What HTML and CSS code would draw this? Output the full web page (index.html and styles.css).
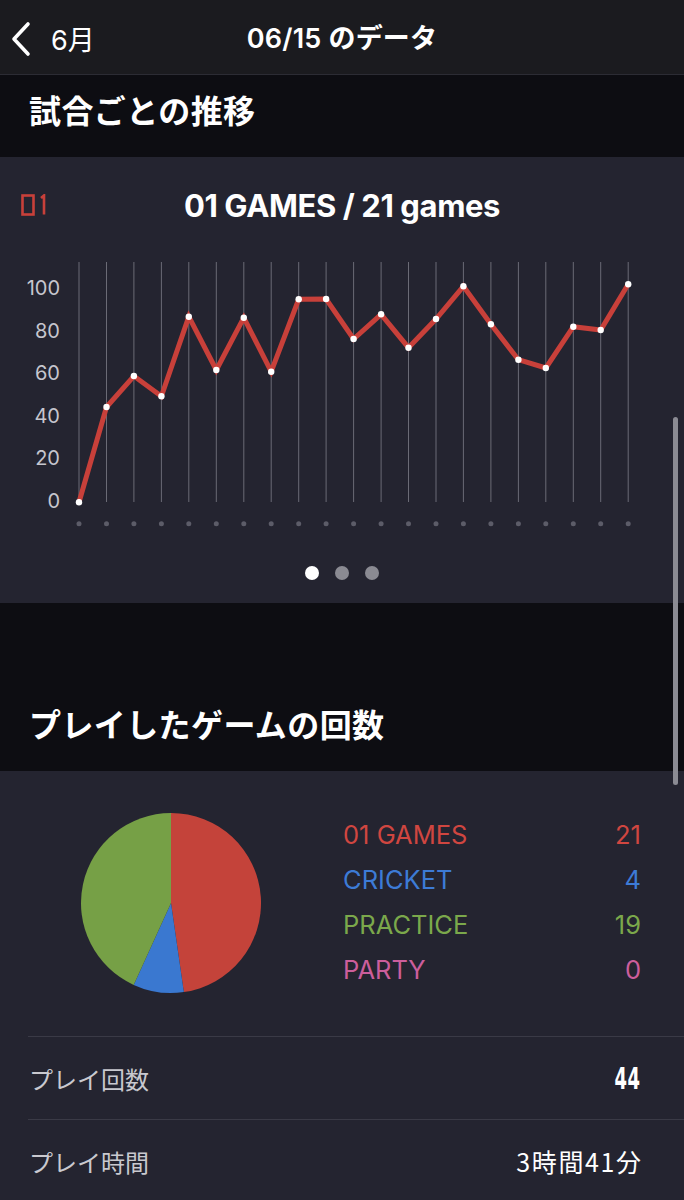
FILE: index.html
```html
<!DOCTYPE html>
<html lang="ja">
<head>
<meta charset="utf-8">
<title>06/15 のデータ</title>
<link rel="stylesheet" href="styles.css">
</head>
<body>
<header class="nav">
  <a class="nav-back">
    <svg class="chevron" width="20" height="36" viewBox="0 0 20 36"><path d="M17 3 L3 18 L17 33" fill="none" stroke="#fff" stroke-width="3.6" stroke-linecap="round" stroke-linejoin="round"/></svg>
    <span>6月</span>
  </a>
  <h1 class="nav-title">06/15 のデータ</h1>
</header>

<section class="section-head"><h2>試合ごとの推移</h2></section>

<section class="card trend">
  <div class="chart-head">
    <svg class="game-icon" width="28" height="22" viewBox="0 0 28 22">
      <rect x="1.5" y="1.5" width="11" height="19" fill="none" stroke="#c8403a" stroke-width="2.6"/>
      <path d="M20 4 L23 1.5 L23 20.5" fill="none" stroke="#c8403a" stroke-width="2.6"/>
    </svg>
    <h3>01 GAMES / 21 games</h3>
  </div>
  <svg class="chart" width="684" height="300" viewBox="0 0 684 300">
    <g class="grid" stroke="#6b6b76" stroke-width="1">
      <line x1="79" y1="22" x2="79" y2="262"/>
      <line x1="106.5" y1="22" x2="106.5" y2="262"/>
      <line x1="133.9" y1="22" x2="133.9" y2="262"/>
      <line x1="161.4" y1="22" x2="161.4" y2="262"/>
      <line x1="188.8" y1="22" x2="188.8" y2="262"/>
      <line x1="216.3" y1="22" x2="216.3" y2="262"/>
      <line x1="243.8" y1="22" x2="243.8" y2="262"/>
      <line x1="271.2" y1="22" x2="271.2" y2="262"/>
      <line x1="298.7" y1="22" x2="298.7" y2="262"/>
      <line x1="326.1" y1="22" x2="326.1" y2="262"/>
      <line x1="353.6" y1="22" x2="353.6" y2="262"/>
      <line x1="381.1" y1="22" x2="381.1" y2="262"/>
      <line x1="408.5" y1="22" x2="408.5" y2="262"/>
      <line x1="436" y1="22" x2="436" y2="262"/>
      <line x1="463.4" y1="22" x2="463.4" y2="262"/>
      <line x1="490.9" y1="22" x2="490.9" y2="262"/>
      <line x1="518.4" y1="22" x2="518.4" y2="262"/>
      <line x1="545.8" y1="22" x2="545.8" y2="262"/>
      <line x1="573.3" y1="22" x2="573.3" y2="262"/>
      <line x1="600.7" y1="22" x2="600.7" y2="262"/>
      <line x1="628.2" y1="22" x2="628.2" y2="262"/>
    </g>
    <g class="axis" text-anchor="end" dominant-baseline="central">
      <text x="60" y="48">100</text>
      <text x="60" y="90.5">80</text>
      <text x="60" y="133">60</text>
      <text x="60" y="175.5">40</text>
      <text x="60" y="218">20</text>
      <text x="60" y="260.5">0</text>
    </g>
    <polyline fill="none" stroke="#c8403a" stroke-width="5" stroke-linejoin="miter" points="79,262.3 106.5,167 133.9,136 161.4,156.3 188.8,76.7 216.3,130 243.8,77.7 271.2,131.7 298.7,59.3 326.1,59 353.6,99 381.1,74.3 408.5,107.7 436,79 463.4,46.3 490.9,84.3 518.4,119.7 545.8,128 573.3,86.7 600.7,90 628.2,44.3"/>
    <g fill="#fff">
      <circle cx="79" cy="262.3" r="3.2"/><circle cx="106.5" cy="167" r="3.2"/><circle cx="133.9" cy="136" r="3.2"/>
      <circle cx="161.4" cy="156.3" r="3.2"/><circle cx="188.8" cy="76.7" r="3.2"/><circle cx="216.3" cy="130" r="3.2"/>
      <circle cx="243.8" cy="77.7" r="3.2"/><circle cx="271.2" cy="131.7" r="3.2"/><circle cx="298.7" cy="59.3" r="3.2"/>
      <circle cx="326.1" cy="59" r="3.2"/><circle cx="353.6" cy="99" r="3.2"/><circle cx="381.1" cy="74.3" r="3.2"/>
      <circle cx="408.5" cy="107.7" r="3.2"/><circle cx="436" cy="79" r="3.2"/><circle cx="463.4" cy="46.3" r="3.2"/>
      <circle cx="490.9" cy="84.3" r="3.2"/><circle cx="518.4" cy="119.7" r="3.2"/><circle cx="545.8" cy="128" r="3.2"/>
      <circle cx="573.3" cy="86.7" r="3.2"/><circle cx="600.7" cy="90" r="3.2"/><circle cx="628.2" cy="44.3" r="3.2"/>
    </g>
    <g fill="#5c5c68">
      <circle cx="79" cy="283.7" r="2.5"/><circle cx="106.5" cy="283.7" r="2.5"/><circle cx="133.9" cy="283.7" r="2.5"/>
      <circle cx="161.4" cy="283.7" r="2.5"/><circle cx="188.8" cy="283.7" r="2.5"/><circle cx="216.3" cy="283.7" r="2.5"/>
      <circle cx="243.8" cy="283.7" r="2.5"/><circle cx="271.2" cy="283.7" r="2.5"/><circle cx="298.7" cy="283.7" r="2.5"/>
      <circle cx="326.1" cy="283.7" r="2.5"/><circle cx="353.6" cy="283.7" r="2.5"/><circle cx="381.1" cy="283.7" r="2.5"/>
      <circle cx="408.5" cy="283.7" r="2.5"/><circle cx="436" cy="283.7" r="2.5"/><circle cx="463.4" cy="283.7" r="2.5"/>
      <circle cx="490.9" cy="283.7" r="2.5"/><circle cx="518.4" cy="283.7" r="2.5"/><circle cx="545.8" cy="283.7" r="2.5"/>
      <circle cx="573.3" cy="283.7" r="2.5"/><circle cx="600.7" cy="283.7" r="2.5"/><circle cx="628.2" cy="283.7" r="2.5"/>
    </g>
  </svg>
  <div class="pager">
    <span class="dot active"></span><span class="dot"></span><span class="dot"></span>
  </div>
</section>

<section class="section-head tall"><h2>プレイしたゲームの回数</h2></section>

<section class="card counts">
  <div class="breakdown">
    <svg class="pie" width="182" height="182" viewBox="0 0 182 182">
      <path d="M91,91 L91,1 A90,90 0 0 1 103.84,180.08 Z" fill="#c4433a"/>
      <path d="M91,91 L103.84,180.08 A90,90 0 0 1 53.68,172.9 Z" fill="#3a78d0"/>
      <path d="M91,91 L53.68,172.9 A90,90 0 0 1 91,1 Z" fill="#76a046"/>
    </svg>
    <ul class="legend">
      <li class="red"><span>01 GAMES</span><span>21</span></li>
      <li class="blue"><span>CRICKET</span><span>4</span></li>
      <li class="green"><span>PRACTICE</span><span>19</span></li>
      <li class="pink"><span>PARTY</span><span>0</span></li>
    </ul>
  </div>
  <div class="stats">
    <div class="stat"><span class="stat-label">プレイ回数</span><span class="stat-num">44</span></div>
    <div class="stat"><span class="stat-label">プレイ時間</span><span class="stat-time">3時間41分</span></div>
  </div>
</section>

<div class="scrollbar"></div>
</body>
</html>
```

FILE: styles.css
```css
* { box-sizing: border-box; }

html, body {
  margin: 0;
  padding: 0;
  background: #242430;
  color: #fff;
  font-family: Inter, "Noto Sans CJK JP", sans-serif;
}

h1, h2, h3, ul { margin: 0; padding: 0; }

/* top navigation bar */
.nav {
  position: relative;
  height: 75px;
  background: #1b1b1f;
  border-bottom: 1px solid #2c2c34;
  display: flex;
  align-items: center;
  justify-content: center;
}
.nav-back {
  position: absolute;
  left: 11px;
  top: 19px;
  display: flex;
  align-items: center;
  gap: 20px;
  font-size: 27px;
  color: #fff;
}
.nav-title {
  font-size: 27px;
  font-weight: 600;
  letter-spacing: 0.2px;
  margin-top: -2px;
}

/* dark section headings */
.section-head {
  background: #0d0d12;
  height: 82px;
  display: flex;
  align-items: flex-end;
  padding: 0 0 27px 29px;
}
.section-head.tall { height: 168px; }
.section-head h2 {
  font-family: "Noto Sans CJK JP", sans-serif;
  font-size: 32px;
  font-weight: 700;
  line-height: 42px;
  letter-spacing: 0.4px;
}

.card { background: #242430; }

/* trend chart card */
.trend { padding: 28px 0 23px; }
.chart-head {
  position: relative;
  height: 40px;
  display: flex;
  align-items: center;
  justify-content: center;
}
.game-icon { position: absolute; left: 21px; top: 9px; }
.chart-head h3 {
  font-size: 31px;
  font-weight: 700;
  letter-spacing: -0.4px;
}
.chart { display: block; margin-top: 15px; }
.axis text {
  font-family: Inter, sans-serif;
  font-size: 20px;
  fill: #c6c6ce;
}
.pager {
  margin-top: 26px;
  display: flex;
  justify-content: center;
  gap: 16px;
}
.dot {
  width: 14px;
  height: 14px;
  border-radius: 50%;
  background: #8a8a92;
}
.dot.active { background: #fff; }

/* game counts card */
.breakdown {
  display: flex;
  align-items: flex-start;
  padding: 41px 0 42px 80px;
}
.pie { display: block; }
.legend {
  list-style: none;
  margin-left: 81px;
  width: 298px;
}
.legend li {
  height: 45px;
  display: flex;
  align-items: center;
  justify-content: space-between;
  font-size: 25.5px;
}
.legend .red { color: #d04640; }
.legend .blue { color: #3d7bd6; }
.legend .green { color: #7ba84b; }
.legend .pink { color: #cc5e9c; }

.stats { margin-left: 28px; }
.stat {
  height: 83px;
  border-top: 1px solid #3a3a46;
  display: flex;
  align-items: center;
  justify-content: space-between;
  padding-right: 43px;
}
.stat-label {
  font-family: "Noto Sans CJK JP", sans-serif;
  font-size: 24px;
  color: #c9c9cf;
  padding-left: 1px;
}
.stat-num {
  display: inline-block;
  font-family: "DejaVu Sans", sans-serif;
  font-weight: 700;
  font-size: 30px;
  transform: scaleX(0.6);
  transform-origin: right center;
  letter-spacing: 1px;
}
.stat-time {
  font-family: "Noto Sans CJK JP", sans-serif;
  font-size: 25px;
  letter-spacing: 1.6px;
  margin-right: -1.6px;
}

/* overlay scroll indicator */
.scrollbar {
  position: absolute;
  left: 673px;
  top: 417px;
  width: 5px;
  height: 368px;
  border-radius: 3px;
  background: #8b8b93;
}
```
